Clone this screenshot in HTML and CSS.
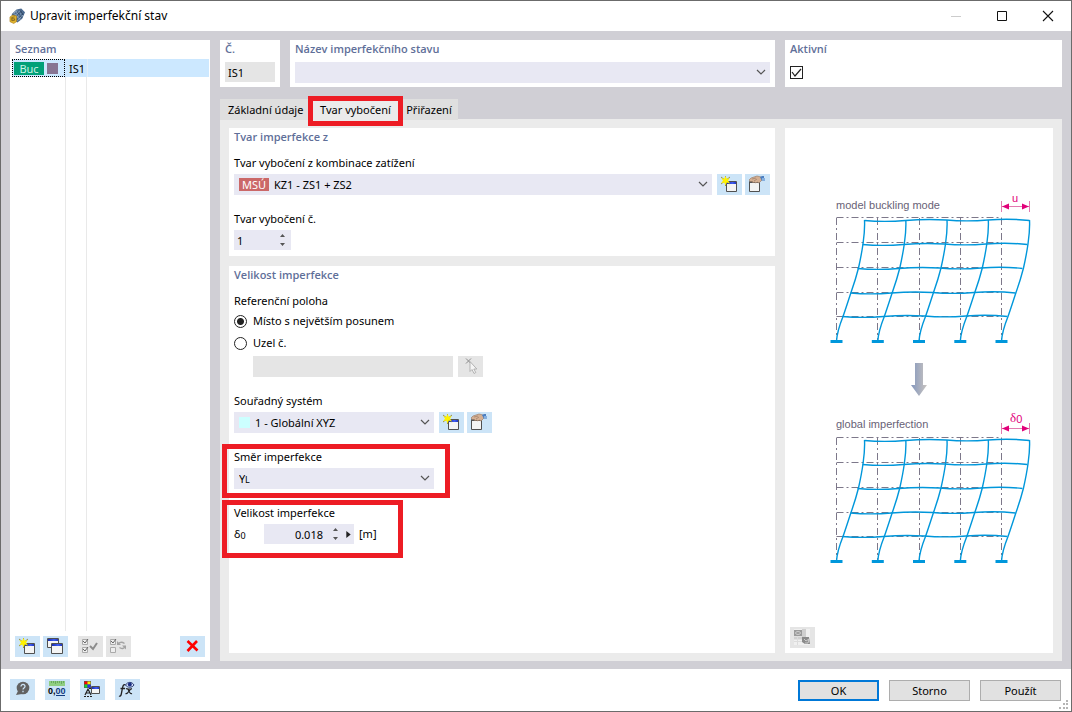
FILE: index.html
```html
<!DOCTYPE html>
<html lang="cs">
<head>
<meta charset="utf-8">
<title>Upravit imperfekční stav</title>
<link rel="stylesheet" href="styles.css">
</head>
<body>
<svg class="defs" aria-hidden="true">
  <defs>
    <linearGradient id="bar" x1="0" x2="1"><stop offset="0" stop-color="#1a2fae"/><stop offset=".6" stop-color="#3f5cf0"/><stop offset="1" stop-color="#2038c0"/></linearGradient>
    <linearGradient id="arrow" x1="0" x2="1"><stop offset="0" stop-color="#8497bd"/><stop offset="1" stop-color="#c9c4c0"/></linearGradient>
    <symbol id="i-new" viewBox="0 0 25 21">
      <path d="M9.500 7.500h10v10h-10z" fill="#f4f4f4" stroke="#505050"/>
      <path d="M10 8h9v2h-9z" fill="url(#bar)"/>
      <path d="M4 3l9 7M13 3l-9 7M8.500 2v10" stroke="#8b7a1c" stroke-width=".8"/>
      <path d="M8.500 2l1.300 2.800 3-.6-1.800 2.300 1.800 2.700-3-.7-1.300 2.700-1.300-2.700-3 .7L6 6.500 4.200 4.200l3 .6z" fill="#fff200"/>
    </symbol>
    <symbol id="i-edit" viewBox="0 0 25 21">
      <path d="M4.500 7.500h10v10h-10z" fill="#f4f4f4" stroke="#505050"/>
      <path d="M5 8h9v1H5z" fill="#555"/>
      <path d="M4 6l2-2 3-1 3-1 4 1 1 3-2 2-1 1-2-1-1 1-2-1-1 1-1-2-1 1z" fill="#d5b093" stroke="#937561" stroke-width=".6"/>
      <path d="M7 5l4-1M9 7l3-2" stroke="#9b7d68" stroke-width=".7"/>
      <path d="M15 3l2-1h2v4l-2 1z" fill="#4d7fc0"/><path d="M17 4h3v3h-3z" fill="#84afe0"/>
    </symbol>
    <symbol id="i-copy" viewBox="0 0 25 21">
      <path d="M4.500 2.500h11v9h-11z" fill="#f4f4f4" stroke="#505050"/><path d="M5 3h10v2H5z" fill="url(#bar)"/>
      <path d="M8.500 7.500h11v10h-11z" fill="#f4f4f4" stroke="#505050"/><path d="M9 8h10v2H9z" fill="url(#bar)"/>
    </symbol>
    <symbol id="i-checkall" viewBox="0 0 25 21">
      <path d="M4.500 3.500h5v5h-5zM4.500 11.500h5v5h-5z" fill="#eee" stroke="#aaa"/>
      <path d="M5 5l2 2 3-4M5 13l2 2 3-4" fill="none" stroke="#666"/>
      <path d="M12 10l3 3 4-6" fill="none" stroke="#8c8c8c" stroke-width="2"/>
    </symbol>
    <symbol id="i-invert" viewBox="0 0 25 21">
      <path d="M4.500 3.500h5v5h-5zM4.500 11.500h5v5h-5z" fill="#eee" stroke="#aaa"/>
      <path d="M5 5l2 2 3-4" fill="none" stroke="#666"/>
      <path d="M12.500 7.500c2-2 4-1.500 6 0M19.500 10c-1.500 3-4 3-6 1.500" fill="none" stroke="#a3a3a3" stroke-width="1.500"/>
      <path d="M11 5v4h4zM20 13.500V9.500h-4z" fill="#a3a3a3"/>
    </symbol>
    <symbol id="i-delete" viewBox="0 0 25 21"><path d="M7.500 5l10 9.500M17 5L7.500 15" stroke="#f00" stroke-width="2.600"/></symbol>
    <symbol id="i-help" viewBox="0 0 25 21">
      <circle cx="13" cy="9" r="6.300" fill="#626262"/><path d="M8 12l-2 4 6-1z" fill="#626262"/>
      <path d="M11 7.500c0-3 4.200-2.500 4 0-.2 1.500-2 1.400-2 3M13 11.800v1.400" fill="none" stroke="#cce4f7" stroke-width="1.300"/>
    </symbol>
    <symbol id="i-units" viewBox="0 0 25 21">
      <path d="M4 2h16v5H4z" fill="#8fce82"/><path d="M6.500 2v2M8.500 2v2M10.500 2v3M12.500 2v2M14.500 2v2M16.500 2v3M18.500 2v2" stroke="#599b50" stroke-width=".7"/>
      <text x="3" y="15" class="icon-digits">0,<tspan fill="#123b80">00</tspan></text><path d="M11 16.500h9" stroke="#123b80"/>
    </symbol>
    <symbol id="i-display" viewBox="0 0 25 21">
      <path d="M4 2h7v7H4z" fill="#555"/><path d="M4.500 2.500h3v3h-3z" fill="red"/><path d="M7.500 2.500h3v3h-3z" fill="#ffe800"/><path d="M4.500 5.500h3v3h-3z" fill="#19d52b"/><path d="M7.500 5.500h3v3h-3z" fill="#2536ec"/>
      <path d="M5 16l3-6 3 6M6 14h4M4 17.500h2M7 17.500h2M10 17.500h2M9 9.500h3" fill="none" stroke="#222" stroke-width="1.200"/>
      <path d="M11.500 7.500h8v7h-8z" fill="#f4f4f4" stroke="#505050"/><path d="M12 8h7v2h-7z" fill="url(#bar)"/>
    </symbol>
    <symbol id="i-formula" viewBox="0 0 25 21">
      <path d="M10.500 6c-1.500-1-2.500 0-3 3l-1.200 6c-.4 2-1.300 2.500-2.300 2M5.500 9.500h4.500" fill="none" stroke="#222" stroke-width="1.300"/>
      <path d="M11 10c3-2 3 6 6 4.500M17 9.500c-2-.5-4 6.500-6.500 5M12 10h5" fill="none" stroke="#222" stroke-width="1.200"/>
      <path d="M10.500 6c2-3.500 6.500-3.500 8.500 0-2 3-6.500 3-8.500 0z" fill="#d7e2fb" stroke="#2b3e75"/><circle cx="14.800" cy="5.500" r="2" fill="#1b2f82"/>
    </symbol>
    <symbol id="i-pick" viewBox="0 0 25 21">
      <path d="M8 2.500l5 5M13 2.500l-5 5" stroke="#8b8b8b"/>
      <path d="M12 5.500v10l2-2 2 4 1.800-1-2-3.500h3z" fill="#f5f5f5" stroke="#a5a5a5" stroke-width=".8"/>
    </symbol>
    <symbol id="i-image" viewBox="0 0 25 21">
      <path d="M4 2h16v16H4z" fill="#f0f0f0"/><path d="M12 2h4v8h-4z" fill="#cfcfcf"/><path d="M4 3h8v6H4z" fill="#9b9b9b"/>
      <ellipse cx="8" cy="6" rx="2.500" ry="1.500" fill="none" stroke="#ccc"/>
      <path d="M4 9.500h8v3H4z" fill="#d0d0d0"/><path d="M7.500 9v9M4 14.500h8" stroke="#dcdcdc"/>
      <path d="M12 10h7l1 7h-5l-3-2z" fill="#8a8a8a"/><path d="M14 12l2 2 3-2-1 4h-3" stroke="#ccc" fill="none"/>
    </symbol>
    <symbol id="i-chevron" viewBox="0 0 10 6"><path d="M1 1l4 4 4-4" fill="none" stroke="#555" stroke-width="1.200"/></symbol>
    <g id="bay" fill="none">
      <path d="M31.500 28.500H197M31.500 53.500H197M31.500 78.500H197M31.500 103.500H197M31.500 127.500H197" stroke="#7d788a" stroke-dasharray="7 3 2 3"/>
      <path d="M31.500 29v123M72.500 29v123M114.500 29v123M155.500 29v123M196.500 29v123" stroke="#7d788a" stroke-dasharray="7 3 2 3"/>
      <g stroke="#0097db" stroke-width="1.400">
        <path id="beam" d="M59.500 31.500q20 1.800 41 0t41-.5q20 1.700 41.500 0t41.500.5"/>
        <use href="#beam" x="-2" y="24"/><use href="#beam" x="-7" y="48"/><use href="#beam" x="-14" y="72.500"/><use href="#beam" x="-22" y="96"/>
        <g id="post"><path d="M31.500 152C32 145 35 135 38 127.500C41 119 43.500 111 46 103.500C49 95 51.500 87 53.500 79C55.500 70 57 62 58 55C59.300 46 60 40 59.500 31"/><path d="M25.500 152.500h12" stroke-width="3"/></g>
        <use href="#post" x="41.300"/><use href="#post" x="82.500"/><use href="#post" x="123.800"/><use href="#post" x="165"/>
      </g>
    </g>
    <g id="measure"><path d="M196.500 12v11M224.500 12v11M197 17.500h28" stroke="#e27bb0"/><path d="M197 17.500l7-3v6zM224 17.500l-7-3v6z" fill="#e2007a"/></g>
  </defs>
</svg>

<div class="window">
  <header class="titlebar">
    <svg class="app-icon" viewBox="0 0 17 16"><path d="M3 6l5-5 5-1 4 4-3 7-5 4-6-3z" fill="#4a698f"/><path d="M5 5l4-3M7 7l5-5M8 10l6-6M9 13l6-6M7 3l7 6M5 5l7 7" stroke="#a9bccf" stroke-width=".8"/><path d="M9 4l5 6M12 2l3 5" stroke="#20334c" stroke-width=".8"/><path d="M1 9l3-2 4 1v6l-3 2-4-2z" fill="#e1b52f" stroke="#a77818" stroke-width=".6"/><path d="M3 9.500l3-.5M3 9.500v3.500l3-.5v-1.500H3" stroke="#72571c" fill="none" stroke-width=".8"/></svg>
    <h1>Upravit imperfekční stav</h1>
    <div class="win-buttons">
      <button aria-label="Minimalizovat" disabled><svg viewBox="0 0 12 12"><path d="M1 6.500h10" stroke="#ccc"/></svg></button>
      <button aria-label="Maximalizovat"><svg viewBox="0 0 12 12"><path d="M1.500 1.500h9v9h-9z" fill="none" stroke="#111"/></svg></button>
      <button aria-label="Zavřít"><svg viewBox="0 0 12 12"><path d="M1 1l10 10M11 1L1 11" stroke="#111" stroke-width="1.100"/></svg></button>
    </div>
  </header>

  <main class="workspace">
    <aside class="panel list-panel">
      <h2>Seznam</h2>
      <div class="list">
        <table><tbody><tr><td class="kind"><div class="kind-inner"><span class="buc">Buc</span><i class="swatch purple"></i></div></td><td class="name">IS1</td><td></td></tr></tbody></table>
      </div>
      <div class="tools">
        <button class="tool" aria-label="Nový"><svg><use href="#i-new"/></svg></button>
        <button class="tool" aria-label="Kopírovat"><svg><use href="#i-copy"/></svg></button>
        <button class="tool spaced" aria-label="Vybrat vše" disabled><svg><use href="#i-checkall"/></svg></button>
        <button class="tool" aria-label="Obrátit výběr" disabled><svg><use href="#i-invert"/></svg></button>
        <button class="tool last" aria-label="Smazat"><svg><use href="#i-delete"/></svg></button>
      </div>
    </aside>

    <section class="editor">
      <div class="summary">
        <div class="panel number"><h2><label for="no">Č.</label></h2><input id="no" class="field off" value="IS1" readonly></div>
        <div class="panel title"><h2><label for="title">Název imperfekčního stavu</label></h2><div class="combo"><select id="title"><option></option></select><svg class="chevron"><use href="#i-chevron"/></svg></div></div>
        <div class="panel active"><h2><label for="active">Aktivní</label></h2><span class="check"><input id="active" type="checkbox" checked><svg viewBox="0 0 13 13"><path d="M2 6l3 4 6-7" fill="none" stroke="#222" stroke-width="1.200"/></svg></span></div>
      </div>
      <nav class="tabs" role="tablist">
        <button role="tab">Základní údaje</button>
        <button role="tab" class="current marked" aria-selected="true">Tvar vybočení</button>
        <button role="tab">Přiřazení</button>
      </nav>
      <div class="page">
        <div class="forms">
          <section class="panel group">
            <h2>Tvar imperfekce z</h2>
            <div class="item">
              <label for="combo">Tvar vybočení z kombinace zatížení</label>
              <div class="row"><div class="combo with-badge"><select id="combo"><option>KZ1 - ZS1 + ZS2</option></select><span class="badge">MSÚ</span><svg class="chevron"><use href="#i-chevron"/></svg></div>
                <div class="pair"><button class="tool" aria-label="Nová kombinace"><svg><use href="#i-new"/></svg></button><button class="tool" aria-label="Upravit kombinaci"><svg><use href="#i-edit"/></svg></button></div></div>
            </div>
            <div class="item">
              <label for="shape">Tvar vybočení č.</label>
              <div class="spin small"><input id="shape" type="number" value="1"><svg class="steps" viewBox="0 0 7 14"><path d="M1 4l2.500-3L6 4zM1 10l2.500 3L6 10z"/></svg></div>
            </div>
          </section>

          <section class="panel group grow">
            <h2>Velikost imperfekce</h2>
            <fieldset>
              <legend>Referenční poloha</legend>
              <label class="radio"><input type="radio" name="ref" checked>Místo s největším posunem</label>
              <label class="radio"><input type="radio" name="ref">Uzel č.</label>
              <div class="row indent"><input class="field off node" aria-label="Uzel č." disabled><button class="tool" aria-label="Vybrat uzel" disabled><svg><use href="#i-pick"/></svg></button></div>
            </fieldset>
            <div class="item">
              <label for="system">Souřadný systém</label>
              <div class="row"><div class="combo mid with-swatch"><select id="system"><option>1 - Globální XYZ</option></select><i class="swatch cyan"></i><svg class="chevron"><use href="#i-chevron"/></svg></div>
                <div class="pair"><button class="tool" aria-label="Nový systém"><svg><use href="#i-new"/></svg></button><button class="tool" aria-label="Upravit systém"><svg><use href="#i-edit"/></svg></button></div></div>
            </div>
            <div class="item marked direction">
              <label for="direction">Směr imperfekce</label>
              <div class="combo mid"><select id="direction"><option>Y</option></select><sub class="axis">L</sub><svg class="chevron"><use href="#i-chevron"/></svg></div>
            </div>
            <div class="item marked size">
              <label for="size">Velikost imperfekce</label>
              <div class="size-row"><span class="delta">δ<sub>0</sub></span><div class="spin value"><input id="size" type="number" step="0.001" value="0.018" lang="en"><svg class="steps" viewBox="0 0 7 14"><path d="M1 4l2.500-3L6 4zM1 10l2.500 3L6 10z"/></svg><svg class="more" viewBox="0 0 5 8"><path d="M0 0l5 4-5 4z"/></svg></div><span>[m]</span></div>
            </div>
          </section>
        </div>

        <section class="panel preview">
          <div class="drawing">
            <svg viewBox="0 0 228 378" role="img" aria-label="model buckling mode, global imperfection">
              <text x="31" y="20" class="caption">model buckling mode</text>
              <text x="207" y="13" class="pink">u</text>
              <use href="#measure"/><use href="#bay"/>
              <path d="M110 174h8v22h4l-8 11-8-11h4z" fill="url(#arrow)"/>
              <text x="31" y="239" class="caption">global imperfection</text>
              <text x="205" y="233" class="pink"><tspan class="serif">δ</tspan><tspan dy="1">0</tspan></text>
              <use href="#measure" y="222"/><use href="#bay" y="220"/>
            </svg>
          </div>
          <button class="tool" aria-label="Obrázek" disabled><svg><use href="#i-image"/></svg></button>
        </section>
      </div>
    </section>
  </main>

  <footer class="footer">
    <div class="foot-tools">
      <button class="tool" aria-label="Nápověda"><svg><use href="#i-help"/></svg></button>
      <button class="tool" aria-label="Jednotky"><svg><use href="#i-units"/></svg></button>
      <button class="tool" aria-label="Zobrazení"><svg><use href="#i-display"/></svg></button>
      <button class="tool" aria-label="Vzorce"><svg><use href="#i-formula"/></svg></button>
    </div>
    <div class="actions"><button class="primary">OK</button><button>Storno</button><button>Použít</button></div>
    <svg class="grip" viewBox="0 0 9 9"><path d="M7 0h2v2H7zM4 3h2v2H4zM7 3h2v2H7zM0 7h2v2H0zM4 7h2v2H4zM7 7h2v2H7z" fill="#b5b5b5"/></svg>
  </footer>
</div>
</body>
</html>
```

FILE: styles.css
```css
* { box-sizing: border-box; }
body { margin: 0; font: 11px/16px "Noto Sans", "Open Sans", sans-serif; color: #000; }
button, input, select { font: inherit; color: inherit; border: 0; padding: 0; margin: 0; border-radius: 0; }
h1, h2 { margin: 0; font-size: 11px; }
h1 { font-size: 12px; font-weight: 400; }
h2 { color: #5f6f99; font-family: "Open Sans", "Noto Sans", sans-serif; font-weight: 600; }
.defs { position: absolute; width: 0; height: 0; }

.window { display: flex; flex-direction: column; min-height: 100vh; background: #fff; border: 1px solid #6b6b6b; }
.titlebar { display: flex; align-items: center; height: 30px; padding-left: 8px; gap: 5px; }
.app-icon { width: 16px; height: 16px; }
.win-buttons { display: flex; margin-left: auto; }
.win-buttons button { display: grid; place-items: center; width: 46px; height: 28px; background: none; }
.win-buttons svg { width: 12px; height: 12px; }

.workspace { flex: 1; display: flex; gap: 10px; padding: 9px 9px 8px; background: #d0cfd5; }
.panel { background: #fff; padding: 1px 5px 5px; }
.list-panel { flex: 0 0 200px; display: flex; flex-direction: column; padding-bottom: 4px; }
.list { flex: 1; margin: 2px -4px 5px -3px; background: linear-gradient(90deg, transparent 53px, #e9e9e9 53px 54px, transparent 54px 74px, #e9e9e9 74px 75px, transparent 75px); }
table { width: 100%; table-layout: fixed; border-collapse: collapse; background: #cce8ff; }
td { height: 18px; padding: 0; }
td.kind { width: 53px; }
.kind-inner { display: flex; align-items: center; gap: 3px; height: 18px; padding-left: 1px; border: 1px dotted #000; background: #cce8ff; }
td.name { width: 22px; padding: 1px 0 0 4px; border-right: 1px solid #e3edf5; }
.buc { width: 30px; height: 13px; line-height: 13px; text-align: center; color: #c7f3e6; background: #00a078; }
.swatch { width: 11px; height: 11px; }
.purple { background: #877593; }
.cyan { background: #ccffff; }

.tools, .pair { display: flex; gap: 3px; }
.tool { display: block; flex: none; width: 25px; height: 21px; background: #cce4f7; }
.tool svg { display: block; width: 25px; height: 21px; }
.tool:disabled { background: #e5e5e5; }
.spaced { margin-left: 7px; }
.last { margin-left: auto; }

.editor { flex: 1; display: flex; flex-direction: column; min-width: 0; }
.summary { display: grid; grid-template-columns: 60px minmax(0, 1fr) 277px; gap: 10px; }
.summary .panel { padding-bottom: 4px; }
.summary h2 { margin-bottom: 5px; }
.field { display: block; height: 20px; background: #e8e8f3; }
.off { background: #e5e5e5; }
.number .field { width: 100%; padding-left: 3px; }
.check { display: block; position: relative; width: 13px; height: 13px; margin-top: 9px; }
.check input { display: block; appearance: none; width: 13px; height: 13px; border: 1px solid #222; }
.check svg { position: absolute; inset: 0; pointer-events: none; }

.combo { flex: 1; position: relative; height: 21px; }
.combo select { display: block; appearance: none; width: 100%; height: 21px; padding: 0 5px; background: #e8e8f3; }
.mid { flex: none; width: 200px; }
.chevron { position: absolute; right: 4px; top: 7px; width: 10px; height: 6px; pointer-events: none; }
.with-badge select { padding-left: 40px; }
.badge { position: absolute; left: 5px; top: 4px; width: 30px; height: 13px; line-height: 13px; text-align: center; color: #fff; background: #cb6868; pointer-events: none; }
.with-swatch select { padding-left: 21px; }
.with-swatch .swatch { position: absolute; left: 5px; top: 5px; pointer-events: none; }
sub { font-size: 9px; line-height: 1; vertical-align: -1px; }
.axis { position: absolute; left: 11px; top: 7px; pointer-events: none; }

.tabs { display: flex; margin-top: 12px; height: 20px; }
.tabs button { height: 21px; padding: 0 4px; background: #dfdfdf; position: relative; white-space: nowrap; }
.tabs button:first-child { flex: 0 0 91px; padding-left: 8px; text-align: left; }
.tabs .current { flex: 0 0 89px; background: #ebebeb; }
.tabs button:last-child { flex: 0 0 58px; text-align: center; }
.marked { position: relative; }
.marked::after { content: ""; position: absolute; border: 5px solid #ed1c24; pointer-events: none; z-index: 2; }
.tabs .marked::after { inset: -3px -3px -6px; }
.direction, .size { align-self: flex-start; }
.direction::after { inset: -5px -16px -9px -12px; }
.size::after { inset: -5px -26px -14px -12px; }

.page { flex: 1; display: flex; gap: 10px; padding: 9px 9px 8px; background: #ebebeb; }
.forms { flex: 1; display: flex; flex-direction: column; gap: 10px; min-width: 0; }
.group { display: flex; flex-direction: column; align-items: stretch; gap: 16px; padding-bottom: 6px; }
.grow { flex: 1; }
.group h2 { margin-bottom: -6px; }
.item > label { display: block; margin-bottom: 3px; }
.row { display: flex; gap: 5px; }
.spin { position: relative; height: 20px; }
.spin input { display: block; width: 100%; height: 20px; padding-left: 3px; background: #e8e8f3; appearance: textfield; }
.spin input::-webkit-inner-spin-button { appearance: none; margin: 0; }
.small { width: 57px; }
.steps { position: absolute; right: 5px; top: 3px; width: 7px; height: 14px; fill: #555; pointer-events: none; }
fieldset { border: 0; padding: 0; margin: 0; }
legend { padding: 0; margin-bottom: 1px; }
.radio { display: flex; align-items: center; gap: 6px; height: 22px; }
.radio input { appearance: none; width: 13px; height: 13px; border: 1px solid #222; border-radius: 50%; }
.radio input:checked { background: radial-gradient(circle, #222 0 3px, transparent 4px); }
.indent { margin: 2px 0 0 19px; }
.node { width: 200px; height: 21px; }
.size-row { display: flex; align-items: center; gap: 5px; }
.delta { width: 25px; }
.value { width: 90px; }
.value input { padding-right: 31px; text-align: right; }
.value .steps { right: 15px; }
.more { position: absolute; right: 3px; top: 7px; width: 5px; height: 7px; fill: #222; }

.preview { flex: 0 0 268px; display: flex; flex-direction: column; padding: 0 5px 5px; }
.drawing { flex: 1; display: grid; place-items: center; }
.drawing svg { width: 228px; height: 378px; }
.caption { font: 11px "Liberation Sans", Arial, sans-serif; fill: #686276; }
.pink { font: 11px "Liberation Sans", Arial, sans-serif; fill: #e2007a; }
.serif { font-family: "Liberation Serif", serif; font-size: 13px; }
.icon-digits { font: bold 9px "Liberation Sans", Arial, sans-serif; }

.footer { position: relative; display: flex; justify-content: space-between; align-items: flex-start; height: 42px; padding: 10px 10px 0 9px; }
.foot-tools { display: flex; gap: 10px; }
.actions { display: flex; gap: 10px; }
.actions button { width: 81px; height: 21px; margin-top: 1px; background: #e1e1e1; border: 1px solid #adadad; }
.actions .primary { border: 2px solid #0078d7; }
.grip { position: absolute; right: 3px; bottom: 2px; width: 9px; height: 9px; }
```
